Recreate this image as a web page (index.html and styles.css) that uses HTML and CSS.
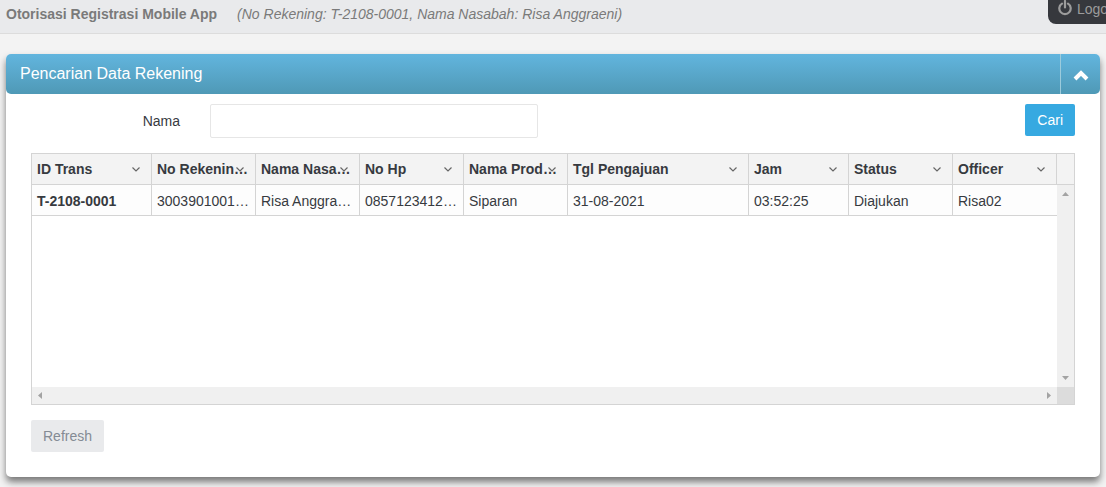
FILE: index.html
```html
<!DOCTYPE html>
<html lang="id">
<head>
    <meta charset="UTF-8">
    <meta name="viewport" content="width=device-width, initial-scale=1.0">
    <title>Otorisasi Registrasi Mobile App</title>
    <link rel="stylesheet" href="styles.css">
</head>
<body>
    <svg class="sprite" aria-hidden="true">
        <symbol id="chevron" viewBox="0 0 8 5">
            <path d="M.5.5 4 4 7.5.5" fill="none" stroke="currentColor" stroke-width="1.2"/>
        </symbol>
    </svg>

    <header class="topbar">
        <h1 class="page-title">Otorisasi Registrasi Mobile App</h1>
        <em class="page-info">(No Rekening: T-2108-0001, Nama Nasabah: Risa Anggraeni)</em>
        <a href="#" class="logout">
            <svg class="logout-icon" viewBox="0 0 14 16">
                <path d="M4 3.6a5.7 5.7 0 1 0 6 0M7 1v6.5" fill="none" stroke="currentColor" stroke-width="2.2" stroke-linecap="round"/>
            </svg>
            <span>Logout</span>
        </a>
    </header>

    <main class="panel">
        <div class="panel-header">
            <h2>Pencarian Data Rekening</h2>
            <button type="button" class="panel-toggle" aria-label="Tutup panel">
                <svg viewBox="0 0 16 11">
                    <path d="M2 9l6-6 6 6" fill="none" stroke="currentColor" stroke-width="4"/>
                </svg>
            </button>
        </div>

        <div class="panel-body">
            <form class="search-form">
                <label for="nama">Nama</label>
                <input type="text" id="nama" name="nama">
                <button type="button" class="btn btn-primary">Cari</button>
            </form>

            <div class="grid">
                <div class="grid-view">
                    <table class="grid-table">
                        <colgroup>
                            <col class="col-id">
                            <col class="col-text">
                            <col class="col-text">
                            <col class="col-text">
                            <col class="col-text">
                            <col>
                            <col class="col-time">
                            <col class="col-text">
                            <col class="col-text">
                        </colgroup>
                        <thead>
                            <tr>
                                <th>ID Trans<svg class="menu"><use href="#chevron"/></svg></th>
                                <th>No Rekening Tabungan<svg class="menu"><use href="#chevron"/></svg></th>
                                <th>Nama Nasabah<svg class="menu"><use href="#chevron"/></svg></th>
                                <th>No Hp<svg class="menu"><use href="#chevron"/></svg></th>
                                <th>Nama Produk Tabungan<svg class="menu"><use href="#chevron"/></svg></th>
                                <th>Tgl Pengajuan<svg class="menu"><use href="#chevron"/></svg></th>
                                <th>Jam<svg class="menu"><use href="#chevron"/></svg></th>
                                <th>Status<svg class="menu"><use href="#chevron"/></svg></th>
                                <th>Officer<svg class="menu"><use href="#chevron"/></svg></th>
                            </tr>
                        </thead>
                        <tbody>
                            <tr>
                                <td class="trans-id">T-2108-0001</td>
                                <td>3003901001234</td>
                                <td>Risa Anggraeni</td>
                                <td>0857123412345</td>
                                <td>Siparan</td>
                                <td>31-08-2021</td>
                                <td>03:52:25</td>
                                <td>Diajukan</td>
                                <td>Risa02</td>
                            </tr>
                        </tbody>
                    </table>
                </div>
                <div class="grid-side">
                    <div class="grid-filler"></div>
                    <div class="scroll-v">
                        <svg viewBox="0 0 7 4"><path d="M0 4 3.5 0 7 4z"/></svg>
                        <svg viewBox="0 0 7 4"><path d="M0 0 3.5 4 7 0z"/></svg>
                    </div>
                </div>
                <div class="scroll-h">
                    <svg viewBox="0 0 4 7"><path d="M4 0 0 3.5 4 7z"/></svg>
                    <svg viewBox="0 0 4 7"><path d="M0 0 4 3.5 0 7z"/></svg>
                </div>
                <div class="scroll-corner"></div>
            </div>

            <button type="button" class="btn btn-default">Refresh</button>
        </div>
    </main>
</body>
</html>
```

FILE: styles.css
```css
:root {
    --page: #f3f3f3;
    --bar: #e9eaec;
    --line: #d4d4d4;
    --text: #373a3f;
    --muted: #7a7a7a;
    --primary: #36a9e1;
}

* {
    margin: 0;
    padding: 0;
    box-sizing: border-box;
}

body {
    background: var(--page);
    color: var(--text);
    font-family: "Liberation Sans", Arial, sans-serif;
    font-size: 14px;
    line-height: 20px;
}

button,
input {
    font: inherit;
}

.sprite {
    display: none;
}

/* Top bar */
.topbar {
    display: flex;
    align-items: flex-start;
    height: 34px;
    padding-left: 6px;
    background: var(--bar);
    border-bottom: 1px solid #dcdcdc;
    color: var(--muted);
    overflow: hidden;
    white-space: nowrap;
}

.page-title {
    margin: 4px 20px 0 0;
    font-size: 14px;
}

.page-info {
    margin-top: 4px;
}

.logout {
    display: flex;
    gap: 5px;
    width: 58px;
    height: 24px;
    margin-left: auto;
    padding-left: 10px;
    background: #36383d;
    border-radius: 0 0 0 8px;
    color: #9c9c9c;
    line-height: 18px;
    text-decoration: none;
    overflow: hidden;
}

.logout-icon {
    flex: none;
    width: 14px;
    height: 16px;
}

/* Panel */
.panel {
    margin: 20px 6px 10px;
    background: #fff;
    border-radius: 5px;
    box-shadow: 0 5px 7px rgba(0, 0, 0, 0.5);
}

.panel-header {
    display: flex;
    height: 40px;
    background: linear-gradient(#62b5de, #4f99b6);
    border-radius: 5px;
    color: #fff;
}

.panel-header h2 {
    flex: 1;
    padding-left: 14px;
    font-size: 16px;
    font-weight: normal;
    line-height: 40px;
}

.panel-toggle {
    width: 40px;
    padding-top: 2px;
    background: none;
    border: 0;
    border-left: 1px solid #9ccbdc;
    color: #fff;
    cursor: pointer;
}

.panel-toggle svg {
    display: block;
    width: 16px;
    height: 11px;
    margin: 0 auto;
}

.panel-body {
    padding: 10px 25px 25px;
}

.search-form {
    display: flex;
    align-items: flex-start;
}

.search-form label {
    width: 149px;
    text-align: right;
    line-height: 34px;
}

.search-form input {
    width: 328px;
    height: 34px;
    margin-left: 30px;
    padding: 6px 10px;
    background: #fff;
    border: 1px solid #e6e6e6;
    border-radius: 2px;
    color: var(--text);
}

.btn {
    height: 32px;
    padding: 0 12px;
    border: 0;
    border-radius: 2px;
    cursor: pointer;
}

.btn-primary {
    margin-left: auto;
    background: var(--primary);
    color: #fff;
}

.btn-default {
    background: var(--bar);
    color: #848b94;
}

/* Data grid */
.grid {
    display: grid;
    grid-template-columns: minmax(0, 1fr) 17px;
    grid-template-rows: auto 17px;
    margin: 15px 0;
    border: 1px solid var(--line);
}

.grid-view {
    min-height: 233px;
    overflow: hidden;
}

.grid-table {
    width: 100%;
    table-layout: fixed;
    border-collapse: separate;
    border-spacing: 0;
}

.col-id {
    width: 120px;
}

.col-text {
    width: 104px;
}

.col-time {
    width: 100px;
}

.grid-table th,
.grid-table td {
    height: 31px;
    padding: 0 5px;
    border-right: 1px solid var(--line);
    border-bottom: 1px solid var(--line);
    text-align: left;
    overflow: hidden;
    white-space: nowrap;
    text-overflow: ellipsis;
}

.grid-table th {
    position: relative;
    background: #f3f3f3;
}

.grid-table td {
    padding-top: 2px;
    background: #fdfdfd;
}

.grid-table td:last-child {
    border-right: 0;
}

.grid-table .trans-id {
    font-weight: bold;
}

.menu {
    position: absolute;
    top: 13px;
    right: 11px;
    width: 8px;
    height: 5px;
    color: #666;
}

.grid-side {
    display: flex;
    flex-direction: column;
}

.grid-filler {
    height: 31px;
    background: #f3f3f3;
    border-bottom: 1px solid var(--line);
}

.scroll-v,
.scroll-h {
    display: flex;
    align-items: center;
    justify-content: space-between;
    background: #f0f0f0;
    fill: #a3a3a3;
}

.scroll-v {
    flex: 1;
    flex-direction: column;
    padding: 7px 0;
}

.scroll-v svg {
    width: 7px;
    height: 4px;
}

.scroll-h {
    padding: 0 6px;
}

.scroll-h svg {
    width: 4px;
    height: 7px;
}

.scroll-corner {
    background: #dcdcdc;
}
```
